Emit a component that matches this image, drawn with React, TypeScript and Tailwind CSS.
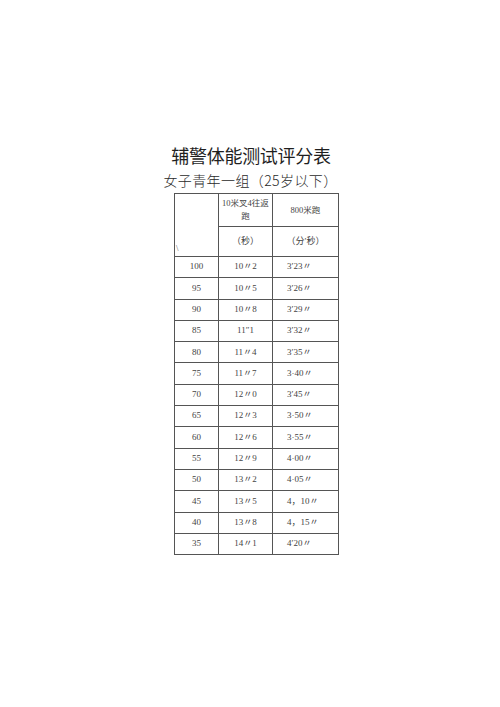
import React from "react";

const rows: [string, string, string][] = [
  ["100", "10〃2", "3′23〃"],
  ["95", "10〃5", "3′26〃"],
  ["90", "10〃8", "3′29〃"],
  ["85", "11″1", "3′32〃"],
  ["80", "11〃4", "3′35〃"],
  ["75", "11〃7", "3·40〃"],
  ["70", "12〃0", "3′45〃"],
  ["65", "12〃3", "3·50〃"],
  ["60", "12〃6", "3·55〃"],
  ["55", "12〃9", "4·00〃"],
  ["50", "13〃2", "4·05〃"],
  ["45", "13〃5", "4，10〃"],
  ["40", "13〃8", "4，15〃"],
  ["35", "14〃1", "4′20〃"],
];

const cellFont = {
  fontFamily: '"Liberation Serif", "Noto Sans CJK SC", serif',
};

export default function App() {
  return (
    <div className="w-[500px] h-[707px] bg-white text-[#2a2a2a]">
      <div className="pt-[143px] flex flex-col items-center">
        <h1
          className="text-[18px] leading-[25px] ml-[2px] tracking-[-0.3px] text-[#1f1f1f]"
          style={{ fontFamily: '"Noto Sans CJK SC", sans-serif' }}
        >
          辅警体能测试评分表
        </h1>
        <h2
          className="mt-[2px] text-[14px] leading-[20px] font-light tracking-[0.4px] ml-[1px] text-[#2a2a2a]"
          style={{ fontFamily: '"Noto Sans CJK SC", sans-serif' }}
        >
          女子青年一组（25岁以下）
        </h2>
      </div>

      <table
        className="ml-[174px] mt-[3px] border-collapse table-fixed w-[164px] text-[9px] text-[#444]"
        style={cellFont}
      >
        <colgroup>
          <col className="w-[44px]" />
          <col className="w-[54px]" />
          <col className="w-[66px]" />
        </colgroup>
        <tbody>
          <tr className="h-[33px]">
            <td
              rowSpan={2}
              className="border border-[#555] align-bottom p-0 relative"
            >
              <span className="absolute left-[1px] bottom-[1px] text-[9px] text-[#666]">
                \
              </span>
            </td>
            <td className="border border-[#555] text-center text-[8.5px] leading-[13px] p-0 whitespace-nowrap">
              10米叉4往返
              <br />跑
            </td>
            <td className="border border-[#555] text-center text-[8.5px]">
              800米跑
            </td>
          </tr>
          <tr className="h-[30px]">
            <td className="border border-[#555] text-center">（秒）</td>
            <td className="border border-[#555] text-center">（分′秒）</td>
          </tr>
          {rows.map(([score, shuttle, run]) => (
            <tr key={score} className="h-[21.3px]">
              <td className="border border-[#555] text-center">{score}</td>
              <td className="border border-[#555] text-center">{shuttle}</td>
              <td className="border border-[#555] pl-[14px]">{run}</td>
            </tr>
          ))}
        </tbody>
      </table>
    </div>
  );
}
